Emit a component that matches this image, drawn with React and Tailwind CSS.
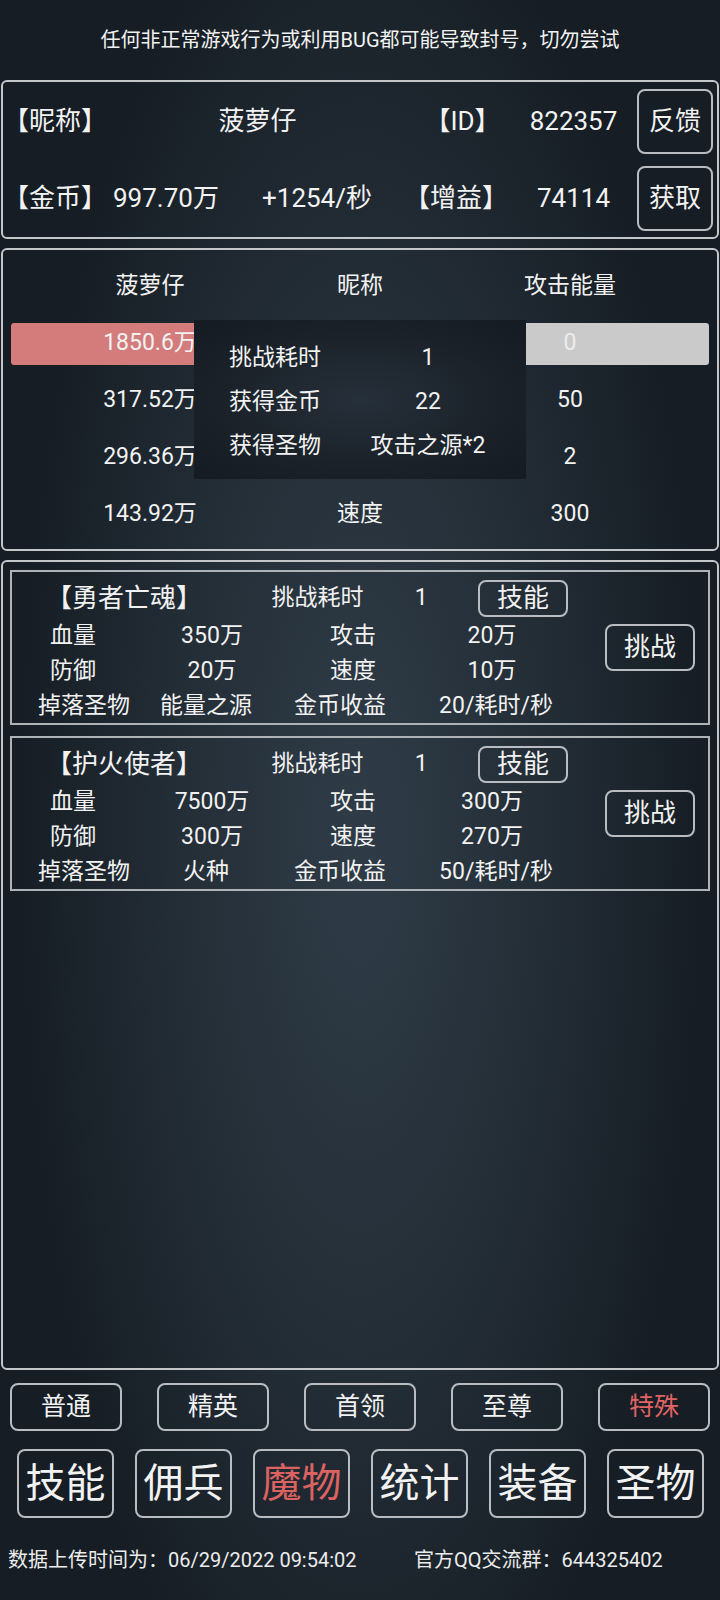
const monsters = [
  {
    name: '【勇者亡魂】',
    time: 1,
    hp: '350万',
    atk: '20万',
    def: '20万',
    spd: '10万',
    drop: '能量之源',
    gold: '20/耗时/秒',
  },
  {
    name: '【护火使者】',
    time: 1,
    hp: '7500万',
    atk: '300万',
    def: '300万',
    spd: '270万',
    drop: '火种',
    gold: '50/耗时/秒',
  },
];

const MonsterCard = ({ m }) => (
  <div className="flex h-[155px] border-2 border-[#aeb3b8]">
    <div className="flex w-[556px] flex-col pt-[5px] text-[23px]">
      <div className="flex h-[42px] items-center">
        <div className="w-[224px] pl-[34px] text-[26px]">{m.name}</div>
        <div className="w-[164px] text-center">挑战耗时</div>
        <div className="w-[44px] text-center">{m.time}</div>
        <button className="ml-[35px] flex h-[37px] w-[90px] items-center justify-center rounded-lg border-2 border-[#b9bcc0] text-[26px]">
          技能
        </button>
      </div>
      <div className="grid h-[35px] grid-cols-[122px_156px_126px_152px] items-center text-center">
        <div>血量</div>
        <div>{m.hp}</div>
        <div>攻击</div>
        <div>{m.atk}</div>
      </div>
      <div className="grid h-[35px] grid-cols-[122px_156px_126px_152px] items-center text-center">
        <div>防御</div>
        <div>{m.def}</div>
        <div>速度</div>
        <div>{m.spd}</div>
      </div>
      <div className="grid h-[34px] grid-cols-[144px_100px_168px_144px] items-center text-center">
        <div>掉落圣物</div>
        <div>{m.drop}</div>
        <div>金币收益</div>
        <div>{m.gold}</div>
      </div>
    </div>
    <div className="flex-1 pl-[37px] pt-[52px]">
      <button className="flex h-[47px] w-[90px] items-center justify-center rounded-lg border-2 border-[#b9bcc0] text-[26px]">
        挑战
      </button>
    </div>
  </div>
);

const tabs = ['普通', '精英', '首领', '至尊', '特殊'];
const menus = ['技能', '佣兵', '魔物', '统计', '装备', '圣物'];

export default function App() {
  return (
    <div className="flex h-[1600px] w-[720px] flex-col bg-[radial-gradient(ellipse_48%_62%_at_50%_52%,#2f3c47_0%,#232d36_55%,#161d24_100%)] font-['Roboto','Noto_Sans_CJK_SC',sans-serif] text-[#f2f2f2]">
      <div className="flex h-[80px] items-center justify-center text-[20px]">
        任何非正常游戏行为或利用BUG都可能导致封号，切勿尝试
      </div>

      {/* player info */}
      <div className="mx-[1px] h-[159px] rounded-md border-2 border-[#c4c7ca] text-[26px]">
        <div className="flex h-[78px] items-center">
          <div className="w-[102px]">【昵称】</div>
          <div className="w-[305px] text-center">菠萝仔</div>
          <div className="w-[105px] text-center">【ID】</div>
          <div className="w-[117px] text-center">822357</div>
          <button className="ml-[5px] flex h-[65px] w-[76px] items-center justify-center rounded-lg border-2 border-[#b9bcc0]">
            反馈
          </button>
        </div>
        <div className="flex h-[77px] items-center">
          <div className="w-[102px]">【金币】</div>
          <div className="w-[132px] pl-[8px]">997.70万</div>
          <div className="w-[160px] text-center">+1254/秒</div>
          <div className="w-[118px] text-center">【增益】</div>
          <div className="w-[117px] text-center">74114</div>
          <button className="ml-[5px] flex h-[65px] w-[76px] items-center justify-center rounded-lg border-2 border-[#b9bcc0]">
            获取
          </button>
        </div>
      </div>

      {/* battle stats */}
      <div className="relative mx-[1px] mt-[9px] h-[303px] rounded-md border-2 border-[#c4c7ca] px-[8px] pb-[6px] pt-[8px]">
        <div className="grid auto-rows-[57px] grid-cols-[278px_142px_278px] items-center text-center text-[23px]">
          <div>菠萝仔</div>
          <div>昵称</div>
          <div>攻击能量</div>

          <div className="flex h-[42px] items-center justify-center rounded-[3px] bg-[#d47c7c]">1850.6万</div>
          <div />
          <div className="flex h-[42px] items-center justify-center rounded-[3px] bg-[#cacaca] text-[#ececec]">0</div>

          <div>317.52万</div>
          <div />
          <div>50</div>

          <div>296.36万</div>
          <div />
          <div>2</div>

          <div>143.92万</div>
          <div>速度</div>
          <div>300</div>
        </div>

        <div className="absolute left-[191px] top-[70px] grid h-[159px] w-[332px] auto-rows-[44px] grid-cols-[120px_158px] items-center bg-[radial-gradient(ellipse_at_center,#26303a_0%,#1a2129_60%,#151b22_100%)] pl-[35px] pt-[16px] text-[23px]">
          <div>挑战耗时</div>
          <div className="text-center">1</div>
          <div>获得金币</div>
          <div className="text-center">22</div>
          <div>获得圣物</div>
          <div className="text-center">攻击之源*2</div>
        </div>
      </div>

      {/* monsters */}
      <div className="mx-[1px] mt-[9px] flex h-[810px] flex-col gap-[11px] rounded-md border-2 border-[#c4c7ca] px-[7px] pt-[8px]">
        {monsters.map((m) => (
          <MonsterCard key={m.name} m={m} />
        ))}
      </div>

      <div className="mt-[13px] flex justify-between px-[10px]">
        {tabs.map((t) => (
          <button
            key={t}
            className={`flex h-[48px] w-[112px] items-center justify-center rounded-lg border-2 border-[#b9bcc0] text-[25px] ${
              t === '特殊' ? 'text-[#e06464]' : ''
            }`}
          >
            {t}
          </button>
        ))}
      </div>

      <div className="mt-[18px] flex gap-[21px] pl-[17px]">
        {menus.map((t) => (
          <button
            key={t}
            className={`flex h-[69px] w-[97px] items-center justify-center rounded-lg border-2 border-[#b9bcc0] text-[40px] ${
              t === '魔物' ? 'text-[#dc6262]' : ''
            }`}
          >
            {t}
          </button>
        ))}
      </div>

      <div className="mt-[28px] flex h-[28px] items-center px-[8px] text-[20px] text-[#ececec]">
        <div className="w-[406px]">数据上传时间为：06/29/2022 09:54:02</div>
        <div>官方QQ交流群：644325402</div>
      </div>
    </div>
  );
}
